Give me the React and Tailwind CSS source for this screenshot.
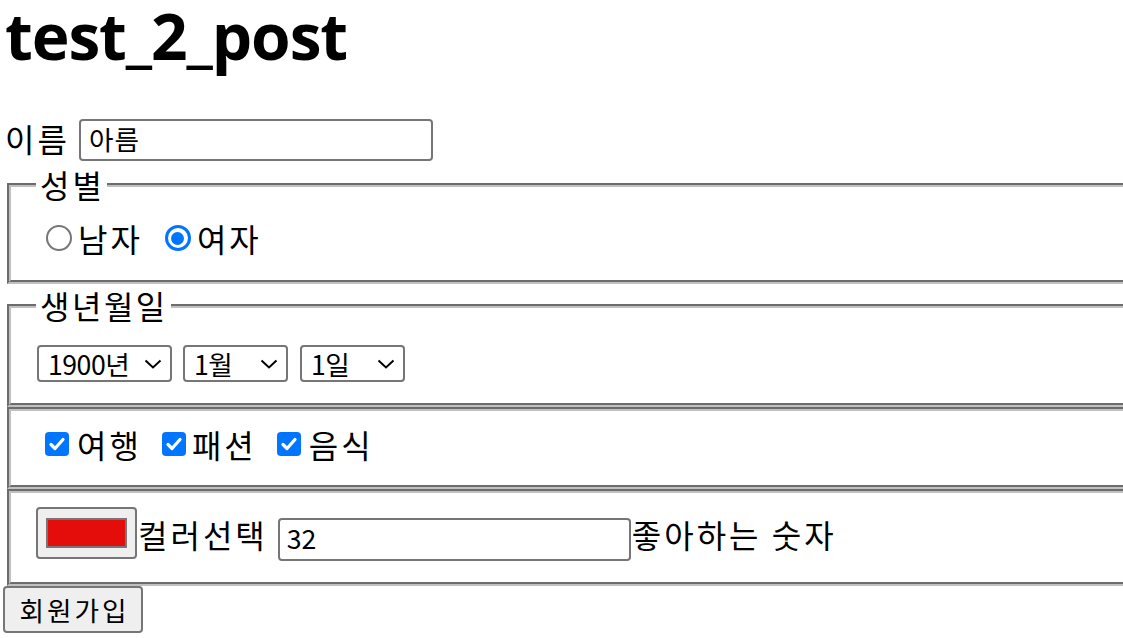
import React from "react";

const Radio = ({ checked }) =>
  checked ? (
    <span className="flex h-[26px] w-[26px] shrink-0 items-center justify-center rounded-full border-[3px] border-[#0075ff] bg-white">
      <span className="block h-[13px] w-[13px] rounded-full bg-[#0075ff]" />
    </span>
  ) : (
    <span className="block h-[26px] w-[26px] shrink-0 rounded-full border-[2px] border-[#767676] bg-white" />
  );

const Check = () => (
  <span className="flex h-[24px] w-[24px] shrink-0 items-center justify-center rounded-[4px] bg-[#0075ff]">
    <svg width="24" height="24" viewBox="0 0 24 24">
      <path d="M6 12.5 L10 16.5 L18 7.5" fill="none" stroke="white" strokeWidth="3.2" strokeLinecap="round" strokeLinejoin="round" />
    </svg>
  </span>
);

const Select = ({ w, label }) => (
  <div className={`flex h-[37px] shrink-0 items-center justify-between rounded-[4px] border-[2px] border-[#767676] bg-white pl-[9px] pr-[8px] text-[26.67px] leading-[33px] ${w}`}>
    <span className="whitespace-nowrap tracking-[-0.5px]">{label}</span>
    <svg width="18" height="10" viewBox="0 0 18 10">
      <path d="M1.5 1.5 L9 8.5 L16.5 1.5" fill="none" stroke="black" strokeWidth="2" />
    </svg>
  </div>
);

export default function App() {
  return (
    <div className="h-[638px] w-[1123px] overflow-hidden bg-white pl-[3px] font-['Noto_Sans_CJK_KR',sans-serif] text-black">
      <div className="h-[118px]">
        <h1 className="ml-[2px] whitespace-nowrap font-['Open_Sans',sans-serif] text-[64px] font-bold leading-[72px] tracking-[-1.1px]">test_2_post</h1>
      </div>

      <div className="flex h-[45px] items-start">
        <span className="ml-[2px] mt-[-1px] whitespace-nowrap text-[32px] leading-[42px] tracking-[3px]">이름</span>
        <div className="ml-[9px] mt-[1px] flex h-[42px] w-[354px] shrink-0 items-center rounded-[4px] border-[2px] border-[#767676] pb-[2px] pl-[8px] text-[26.67px] tracking-[1px]">
          아름
        </div>
      </div>

      <fieldset className="ml-[4px] w-[1300px] min-w-0 border-[4px] border-[#c0c0c0] p-0 [border-style:groove]">
        <legend className="ml-[25px] whitespace-nowrap pl-[4px] pr-[5px] text-[32px] leading-[43px]">
          <span className="mr-[-3px] tracking-[3px]">성별</span>
        </legend>
        <div className="pt-[11px] pb-[21px]">
          <div className="flex h-[42px] items-center whitespace-nowrap text-[32px] leading-[42px] tracking-[3px]">
            <span className="ml-[35px]"><Radio /></span>
            <span className="ml-[6px]">남자</span>
            <span className="ml-[22px]"><Radio checked /></span>
            <span className="ml-[6px]">여자</span>
          </div>
        </div>
      </fieldset>

      <fieldset className="ml-[4px] w-[1300px] min-w-0 border-[4px] border-[#c0c0c0] p-0 [border-style:groove]">
        <legend className="ml-[25px] whitespace-nowrap pl-[4px] pr-[6px] text-[32px] leading-[43px]">
          <span className="mr-[-3px] tracking-[2.5px]">생년월일</span>
        </legend>
        <div className="pt-[18px] pb-[21px]">
          <div className="flex h-[37px] items-center">
            <Select w="w-[135px] ml-[26px]" label="1900년" />
            <Select w="w-[105px] ml-[11px]" label="1월" />
            <Select w="w-[105px] ml-[12px]" label="1일" />
          </div>
        </div>
      </fieldset>

      <fieldset className="ml-[4px] w-[1300px] min-w-0 border-[4px] border-[#c0c0c0] p-0 [border-style:groove]">
        <div className="pt-[12px] pb-[20px]">
          <div className="flex h-[42px] items-center whitespace-nowrap text-[32px] leading-[42px] tracking-[3px]">
            <span className="ml-[34px]"><Check /></span>
            <span className="ml-[8px]">여행</span>
            <span className="ml-[20px]"><Check /></span>
            <span className="ml-[6px]">패션</span>
            <span className="ml-[20px]"><Check /></span>
            <span className="ml-[8px]">음식</span>
          </div>
        </div>
      </fieldset>

      <fieldset className="ml-[4px] w-[1300px] min-w-0 border-[4px] border-[#c0c0c0] p-0 [border-style:groove]">
        <div className="pt-[14px] pb-[23px]">
          <div className="flex h-[52px] items-start whitespace-nowrap text-[32px] leading-[42px] tracking-[3px]">
            <div className="ml-[25px] flex h-[52px] w-[101px] shrink-0 items-center justify-center rounded-[4px] border-[2px] border-[#767676] bg-[#efefef]">
              <div className="h-[30px] w-[81px] border-[2px] border-[#767676] bg-[#e50c0c]" />
            </div>
            <span className="ml-[1px] mt-[6px]">컬러선택</span>
            <div className="ml-[10px] mt-[11px] flex h-[43px] w-[353px] shrink-0 items-center rounded-[4px] border-[2px] border-[#767676] pb-[4px] pl-[7px] text-[26.67px] tracking-normal">
              32
            </div>
            <span className="ml-[1px] mt-[6px]">좋아하는 숫자</span>
          </div>
        </div>
      </fieldset>

      <button className="flex h-[47px] w-[140px] items-center justify-center whitespace-nowrap rounded-[4px] border-[2px] border-[#767676] bg-[#efefef] pl-[3px] text-[26.67px] leading-[40px] tracking-[3px]">
        회원가입
      </button>
    </div>
  );
}
